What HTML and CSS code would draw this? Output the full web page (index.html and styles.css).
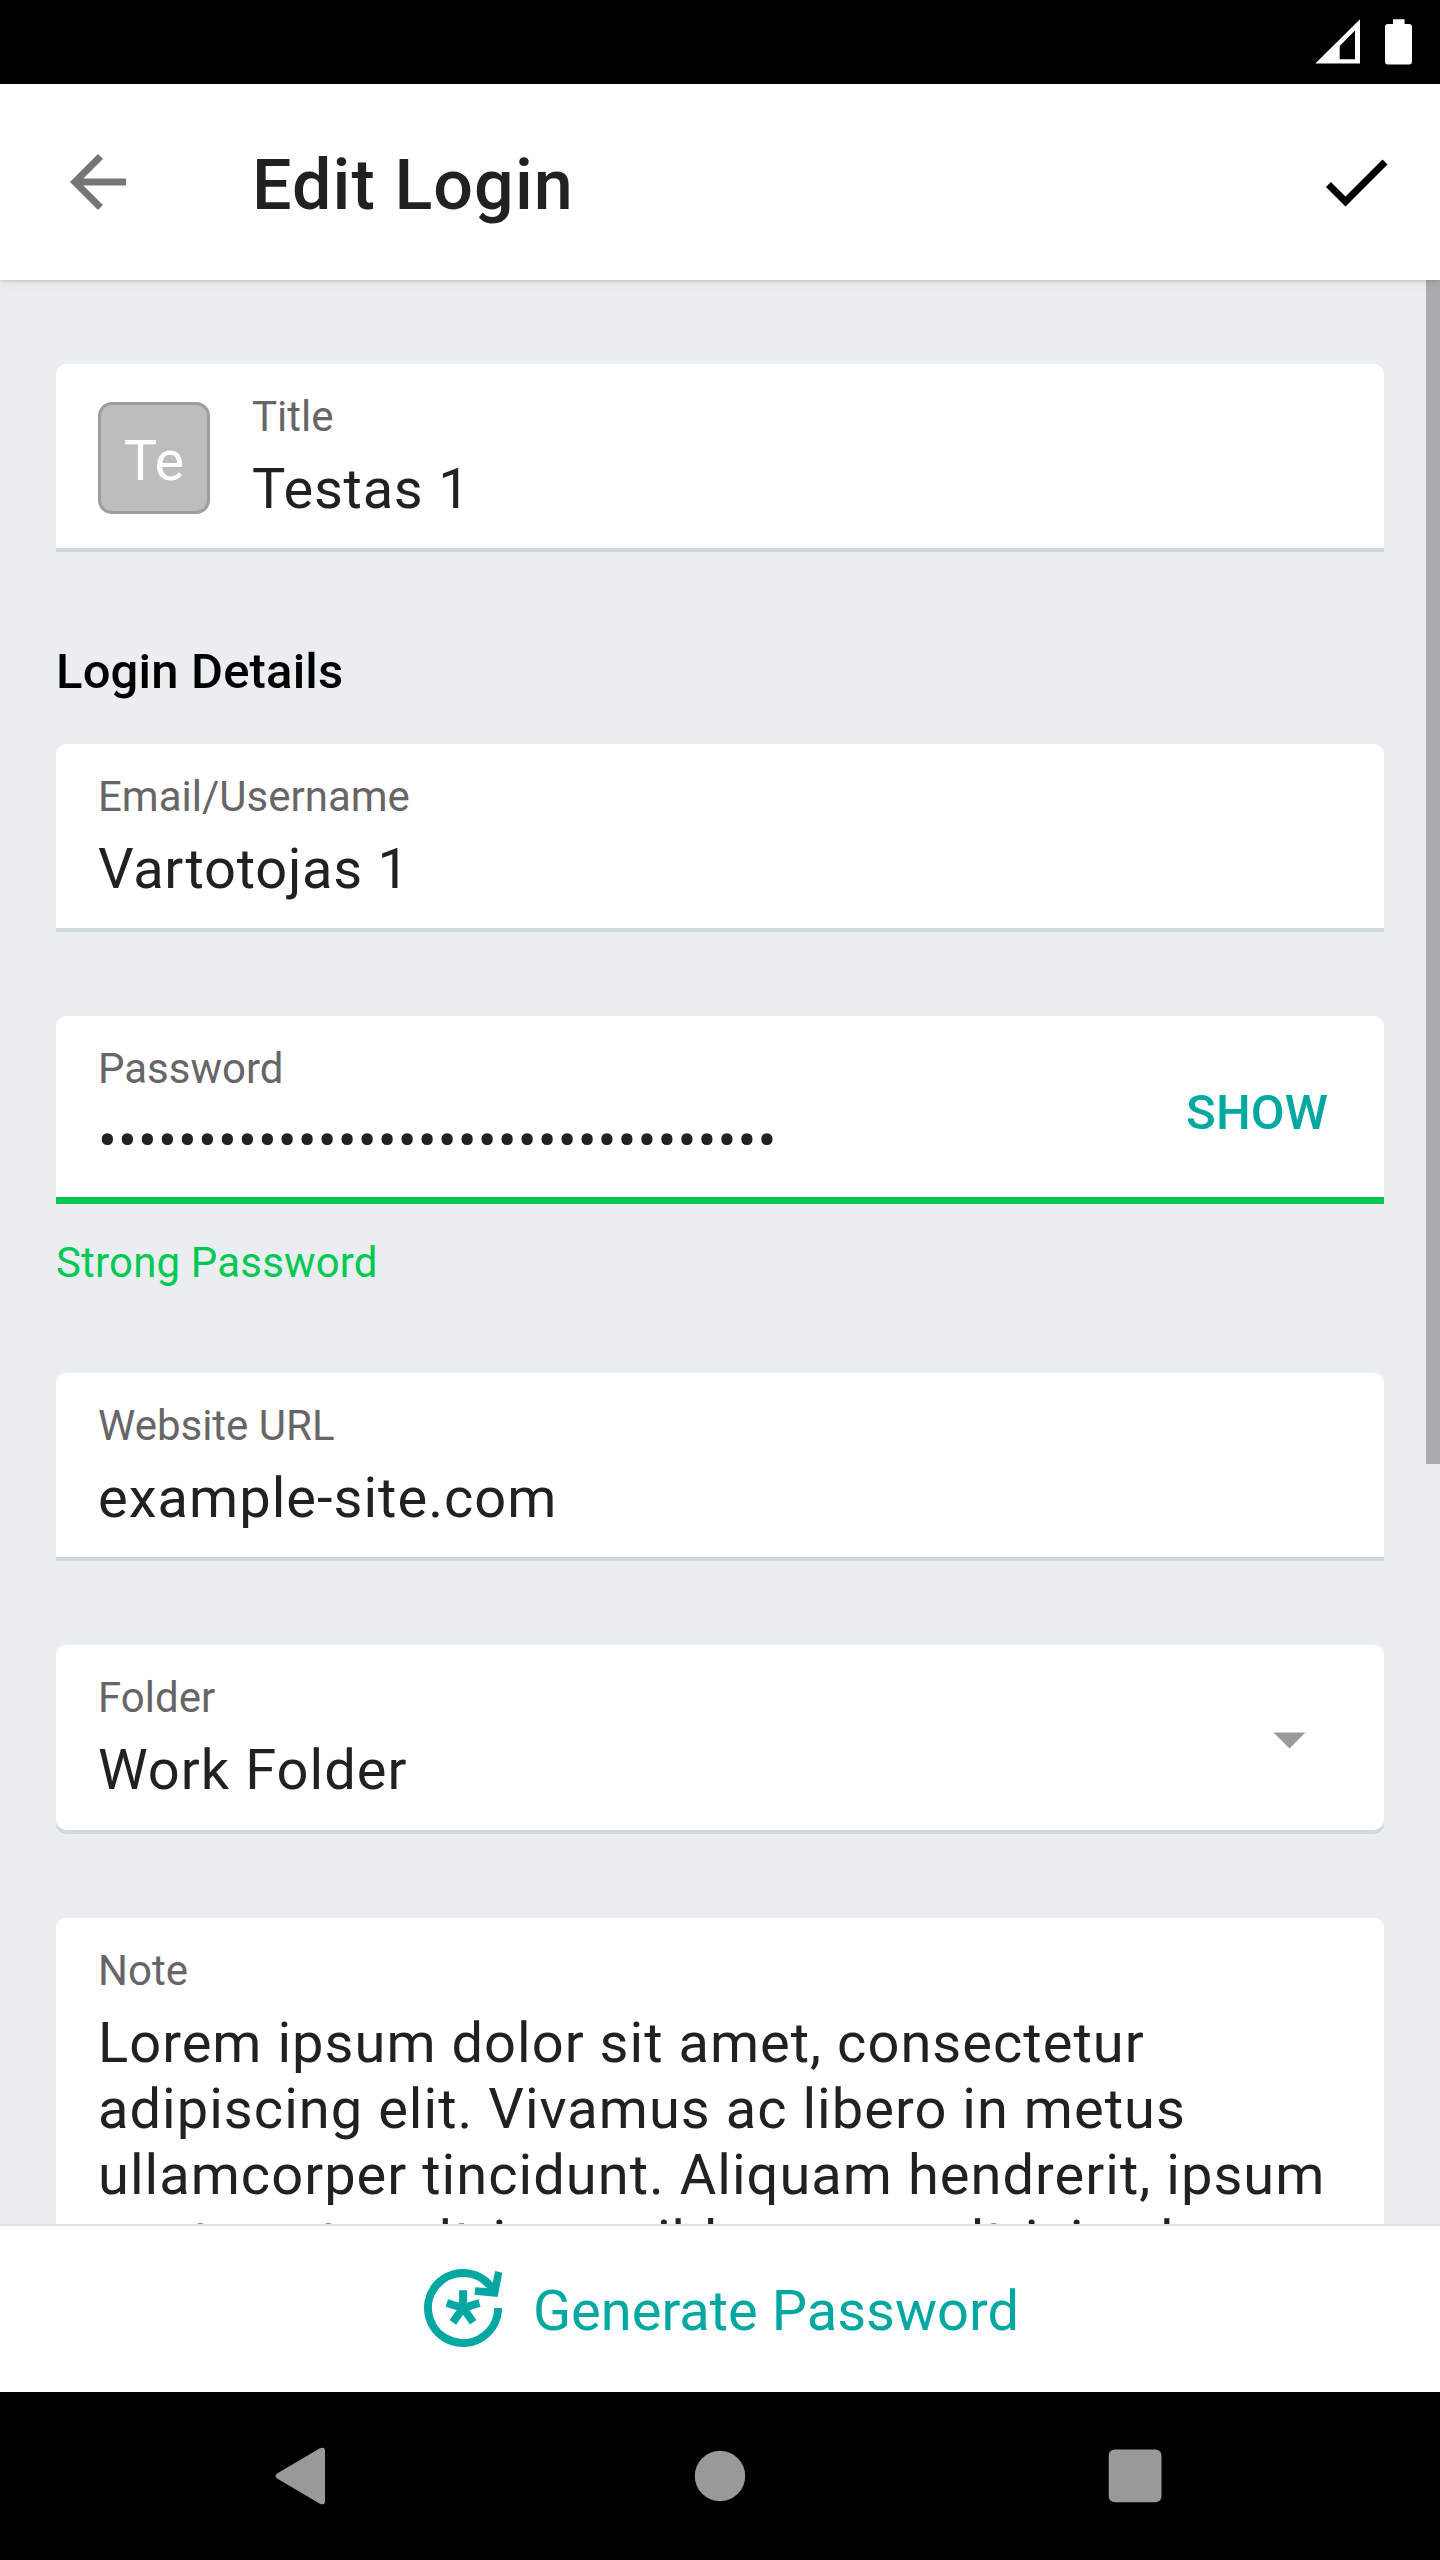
FILE: index.html
```html
<!DOCTYPE html>
<html lang="en">
<head>
<meta charset="utf-8">
<title>Edit Login</title>
<link rel="stylesheet" href="styles.css">
</head>
<body>
<div class="screen">
  <div class="status-bar">
    <svg class="signal" viewBox="0 0 46 46" aria-hidden="true"><path fill-rule="evenodd" d="M.3 44.600 45 .2v44.400zM24.700 26.900v13.400H40V11.600z"/></svg>
    <svg class="battery" viewBox="0 0 28 46" aria-hidden="true"><path d="M8 .2h11.600V5H24a3 3 0 0 1 3 3v34.600a3 3 0 0 1-3 3H3a3 3 0 0 1-3-3V8a3 3 0 0 1 3-3h5z"/></svg>
  </div>

  <header class="toolbar">
    <svg class="icon back" viewBox="0 0 24 24" aria-label="Back"><path d="M20 11H7.830l5.590-5.590L12 4l-8 8 8 8 1.410-1.410L7.830 13H20z"/></svg>
    <h1 class="toolbar-title">Edit Login</h1>
    <svg class="icon confirm" viewBox="0 0 24 24" aria-label="Save"><path d="M9 16.170 4.830 12l-1.420 1.410L9 19 21 7l-1.410-1.410z"/></svg>
  </header>

  <main class="form">
    <section class="field field-title">
      <div class="avatar">Te</div>
      <div class="field-body">
        <div class="label">Title</div>
        <div class="value value-short">Testas 1</div>
      </div>
    </section>

    <h2 class="section-heading">Login Details</h2>

    <section class="field">
      <div class="field-body">
        <div class="label">Email/Username</div>
        <div class="value value-short">Vartotojas 1</div>
      </div>
    </section>

    <section class="field field-strong">
      <div class="field-body">
        <div class="label">Password</div>
        <div class="value value-masked">••••••••••••••••••••••••••••••••••</div>
      </div>
      <button class="show" type="button">SHOW</button>
    </section>
    <p class="hint">Strong Password</p>

    <section class="field">
      <div class="field-body">
        <div class="label">Website URL</div>
        <div class="value">example-site.com</div>
      </div>
    </section>

    <section class="field field-select">
      <div class="field-body">
        <div class="label">Folder</div>
        <div class="value">Work Folder</div>
      </div>
      <svg class="caret" viewBox="0 0 84 84" aria-hidden="true"><path d="M26.500 35.500h32L42.500 51.500z"/></svg>
    </section>

    <section class="field field-note">
      <div class="field-body">
        <div class="label">Note</div>
        <div class="value">Lorem ipsum dolor sit amet, consectetur<br>adipiscing elit. Vivamus ac libero in metus<br>ullamcorper tincidunt. Aliquam hendrerit, ipsum<br>eget auctor ultrices, nibh massa ultricies leo</div>
      </div>
    </section>
    <div class="scrollbar"></div>
  </main>

  <footer class="generate">
    <svg class="generate-icon" viewBox="421 2267 84 84" aria-hidden="true">
      <path class="ring" d="M498 2308A35 35 0 1 1 492 2288.400"/>
      <path class="head" d="M495.100 2271l7.200 1.700-4.600 24.300-23.200-2.300.8-7.400 13.900 1 3.400-5z"/>
      <path class="star" d="M463.100 2308V2290.300M463.100 2308l16.300-5M463.100 2308l10.100 14.300M463.100 2308l-10.300 14.300M463.100 2308l-16.300-5"/>
    </svg>
    <span class="generate-text">Generate Password</span>
  </footer>

  <nav class="nav-bar">
    <svg class="nav-icon" viewBox="0 0 60 60" aria-label="Back"><path d="M7.500 27.200 49.500 2.600Q55 0 55 5v50q0 5-5.500 2.400L7.500 32.800Q3.500 30 7.500 27.200z"/></svg>
    <svg class="nav-icon" viewBox="0 0 60 60" aria-label="Home"><circle cx="30" cy="30" r="25.200"/></svg>
    <svg class="nav-icon" viewBox="0 0 60 60" aria-label="Overview"><rect x="-1.300" y="3.500" width="52.800" height="52.800" rx="6"/></svg>
  </nav>
</div>
</body>
</html>
```
FILE: styles.css
```css
* { box-sizing: border-box; }

body {
  margin: 0;
  background: #000;
  font-family: Roboto, sans-serif;
  font-size: 56px;
  line-height: 66px;
  color: #212121;
}

.screen {
  display: flex;
  flex-direction: column;
  width: 1440px;
  height: 2560px;
  overflow: hidden;
}

.status-bar {
  flex: none;
  display: flex;
  justify-content: flex-end;
  gap: 24px;
  height: 84px;
  padding: 19px 27px 0 0;
  background: #000;
  fill: #fff;
}
.signal { width: 46px; height: 46px; }
.battery { width: 28px; height: 46px; }

.toolbar {
  flex: none;
  position: relative;
  z-index: 1;
  display: flex;
  align-items: center;
  height: 196px;
  padding: 0 42px 0 56px;
  background: #fff;
  box-shadow: 0 1px 3px rgba(0, 0, 0, .14), 0 3px 10px rgba(0, 0, 0, .06);
}
.icon { flex: none; width: 84px; height: 84px; }
.back { fill: #757575; }
.confirm { fill: #000; }
.toolbar-title {
  flex: 1;
  margin: 0;
  padding: 6px 0 0 112px;
  font-size: 70px;
  font-weight: 500;
  line-height: 82px;
  letter-spacing: 1.1px;
}

.form {
  flex: none;
  position: relative;
  height: 1944px;
  padding: 84px 56px 0;
  background: #eaeef1;
  overflow: hidden;
}

.field {
  display: flex;
  height: 188px;
  margin-bottom: 84px;
  padding: 28px 56px 0 42px;
  background: #fff;
  border-radius: 10px 10px 0 0;
  box-shadow: inset 0 -4px #cfd8dc;
}
.field-body { flex: 1; }
.label {
  margin-bottom: 14px;
  font-size: 42px;
  line-height: 50px;
  color: #666;
}
.value {
  letter-spacing: 1.03px;
  white-space: nowrap;
}
.value-short { letter-spacing: .75px; }
.value-masked { letter-spacing: 1.09px; }

.field-title { gap: 42px; margin-bottom: 91px; }
.avatar {
  flex: none;
  width: 112px;
  height: 112px;
  margin-top: 10px;
  padding-top: 23px;
  border: 3px solid #9e9e9e;
  border-radius: 14px;
  background: #bdbdbd;
  color: #fff;
  text-align: center;
}

.section-heading {
  margin: 0 0 44px;
  font-size: 49px;
  font-weight: 500;
  line-height: 57px;
  letter-spacing: .17px;
  color: #000;
}

.field-strong {
  margin-bottom: 34px;
  box-shadow: inset 0 -7px #00c853;
}
.show {
  align-self: flex-start;
  margin: 40px 0 0;
  padding: 0;
  border: 0;
  background: none;
  font: 500 49px/57px Roboto, sans-serif;
  letter-spacing: .15px;
  color: #00a8a1;
}
.hint {
  margin: 0 0 85px;
  font-size: 42px;
  line-height: 50px;
  letter-spacing: .17px;
  color: #00c853;
}

.field-select {
  height: 189px;
  border-radius: 10px;
}
.caret {
  width: 84px;
  height: 84px;
  margin: 24px -3px 0 0;
  fill: #9b9b9b;
}
.field-note { height: 600px; }

.scrollbar {
  position: absolute;
  top: 0;
  right: 0;
  width: 14px;
  height: 1184px;
  background: #aaabac;
}

.generate {
  flex: none;
  display: flex;
  align-items: center;
  justify-content: center;
  gap: 28px;
  height: 168px;
  border-top: 2px solid #e0e0e0;
  background: #fff;
  color: #00a8a1;
}
.generate-icon { width: 84px; height: 84px; }
.generate-text { padding-top: 4px; }
.ring, .star { fill: none; stroke: #00a8a1; stroke-width: 8; }
.head { fill: #00a8a1; }

.nav-bar {
  flex: 1;
  display: flex;
  align-items: center;
  justify-content: center;
  gap: 360px;
  background: #000;
  fill: #999;
}
.nav-icon { width: 60px; height: 60px; overflow: visible; }
```
